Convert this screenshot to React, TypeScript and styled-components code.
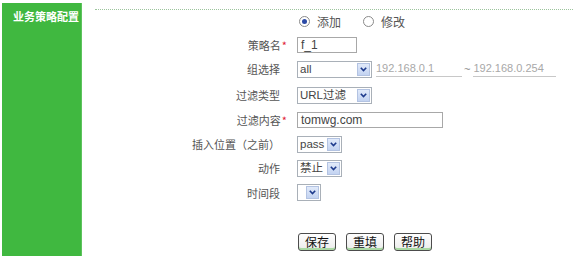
import React from 'react';
import styled, { createGlobalStyle } from 'styled-components';

const GlobalStyle = createGlobalStyle`
  body {
    margin: 0;
    background: #fff;
    font-family: "Liberation Sans", "Noto Sans CJK SC", sans-serif;
  }
`;

const Page = styled.div`
  display: flex;
  align-items: flex-start;
  padding: 3px 0 0 2px;
  height: 259px;
  box-sizing: border-box;
  overflow: hidden;
`;

const Sidebar = styled.div`
  width: 80px;
  height: 253px;
  flex-shrink: 0;
  box-sizing: border-box;
  padding: 6px 0 0 11px;
  background: #40b840;
  border-right: 1px solid #5ec35e;
  color: #fff;
  font: bold 11px/14px "Noto Sans CJK SC", sans-serif;
`;

const Main = styled.div`
  flex: 1;
  margin-left: 13px;
  padding-top: 6px;
`;

const Rule = styled.div`
  border-top: 1px dotted #9cc49c;
`;

const Row = styled.div<{ $h: number }>`
  display: grid;
  grid-template-columns: 185px 1fr;
  column-gap: 17px;
  align-items: center;
  height: ${(p) => p.$h}px;
`;

const Label = styled.div`
  text-align: right;
  font: 11px/14px "Noto Sans CJK SC", sans-serif;
  color: #555;
  white-space: nowrap;
`;

const Req = styled.span`
  color: #e0203a;
  margin-right: -7px;
  padding-left: 1px;
`;

const Field = styled.div`
  display: flex;
  align-items: center;
`;

const RadioGroup = styled.label`
  display: flex;
  align-items: center;
  margin-left: 2px;
  margin-right: 20px;
  font: 12px/14px "Noto Sans CJK SC", sans-serif;
  color: #555;
`;

const RadioDot = styled.span<{ $on?: boolean }>`
  width: 9px;
  height: 9px;
  border: 1px solid #8a8a8a;
  border-radius: 50%;
  margin-right: 7px;
  display: grid;
  place-items: center;
  background: #fff;
  &::after {
    content: '';
    width: 5px;
    height: 5px;
    border-radius: 50%;
    background: ${(p) => (p.$on ? '#2c4aa6' : 'transparent')};
  }
`;

const TextBox = styled.div<{ $w: number }>`
  width: ${(p) => p.$w}px;
  height: 16px;
  box-sizing: border-box;
  border: 1px solid #a8a8a8;
  padding: 0 3px;
  font-size: 12px;
  line-height: 14px;
  color: #444;
`;

const IpBox = styled.div<{ $w: number }>`
  width: ${(p) => p.$w}px;
  height: 16px;
  box-sizing: border-box;
  border-bottom: 1px solid #c8c8c8;
  font-size: 11px;
  line-height: 15px;
  color: #a8a8a8;
`;

const Tilde = styled.span`
  margin: 0 3px 0 2px;
  font-size: 11px;
  color: #888;
`;

const SelectBox = styled.div<{ $w: number }>`
  width: ${(p) => p.$w}px;
  height: 17px;
  box-sizing: border-box;
  border: 1px solid #a9b0b8;
  display: flex;
  align-items: stretch;
  font-size: 11.5px;
  line-height: 15px;
  color: #444;
`;

const SelectText = styled.span`
  flex: 1;
  min-width: 0;
  padding-left: 2px;
  white-space: nowrap;
  font-family: "Liberation Sans", "Noto Sans CJK SC", sans-serif;
`;

const Arrow = styled.span`
  width: 13px;
  flex-shrink: 0;
  margin: 1px;
  box-sizing: border-box;
  border: 1px solid #b3c3e2;
  background: linear-gradient(#e1eafa, #c3d3f1);
  display: grid;
  place-items: center;
`;

const Buttons = styled.div`
  display: flex;
  gap: 10px;
  margin-top: 28px;
  padding-left: 203px;
`;

const Button = styled.button`
  width: 38px;
  height: 18px;
  padding: 0;
  box-sizing: border-box;
  border: 1px solid #4c4c4c;
  border-radius: 3px;
  background: linear-gradient(#ffffff, #ebebeb);
  box-shadow: inset 0 -2px 0 #a9d9a3;
  font: 12px/14px "Noto Sans CJK SC", sans-serif;
  color: #111;
`;

const Select = ({ w, value }: { w: number; value: string }) => (
  <SelectBox $w={w}>
    <SelectText>{value}</SelectText>
    <Arrow>
      <svg width="7" height="5" viewBox="0 0 7 5">
        <path d="M0.8 0.8 L3.5 3.6 L6.2 0.8" fill="none" stroke="#1d3a8c" strokeWidth="1.6" />
      </svg>
    </Arrow>
  </SelectBox>
);

const App: React.FC = () => {
  return (
    <>
      <GlobalStyle />
      <Page>
        <Sidebar>业务策略配置</Sidebar>
        <Main>
          <Rule />
          <Row $h={23}>
            <span />
            <Field>
              <RadioGroup>
                <RadioDot $on />
                添加
              </RadioGroup>
              <RadioGroup>
                <RadioDot />
                修改
              </RadioGroup>
            </Field>
          </Row>
          <Row $h={23}>
            <Label>
              策略名<Req>*</Req>
            </Label>
            <Field>
              <TextBox $w={60}>f_1</TextBox>
            </Field>
          </Row>
          <Row $h={26}>
            <Label>组选择</Label>
            <Field>
              <Select w={75} value="all" />
              <IpBox $w={86} style={{ marginLeft: 4 }}>
                192.168.0.1
              </IpBox>
              <Tilde>~</Tilde>
              <IpBox $w={83}>192.168.0.254</IpBox>
            </Field>
          </Row>
          <Row $h={26}>
            <Label>过滤类型</Label>
            <Field>
              <Select w={75} value="URL过滤" />
            </Field>
          </Row>
          <Row $h={24}>
            <Label>
              过滤内容<Req>*</Req>
            </Label>
            <Field>
              <TextBox $w={146}>tomwg.com</TextBox>
            </Field>
          </Row>
          <Row $h={24}>
            <Label>插入位置（之前）</Label>
            <Field>
              <Select w={45} value="pass" />
            </Field>
          </Row>
          <Row $h={24}>
            <Label>动作</Label>
            <Field>
              <Select w={45} value="禁止" />
            </Field>
          </Row>
          <Row $h={25}>
            <Label>时间段</Label>
            <Field>
              <Select w={24} value="" />
            </Field>
          </Row>
          <Buttons>
            <Button>保存</Button>
            <Button>重填</Button>
            <Button>帮助</Button>
          </Buttons>
        </Main>
      </Page>
    </>
  );
};

export default App;
